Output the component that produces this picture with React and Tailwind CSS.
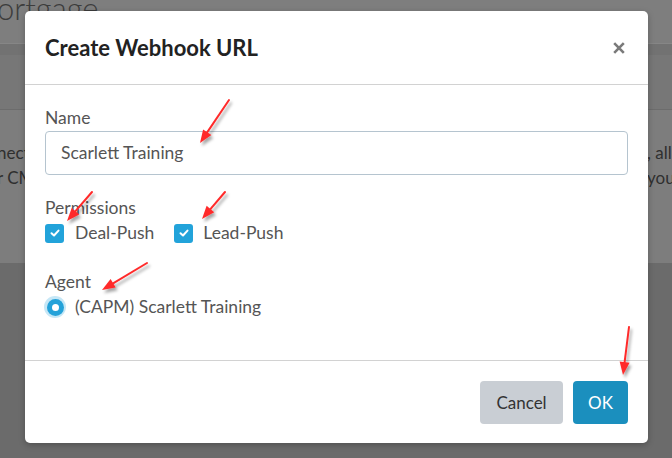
import React from "react";

function Arrow({ x1, y1, x2, y2 }) {
  const dx = x2 - x1;
  const dy = y2 - y1;
  const len = Math.sqrt(dx * dx + dy * dy);
  const ux = dx / len;
  const uy = dy / len;
  const hl = 13;
  const hw = 5;
  const bx = x2 - ux * hl;
  const by = y2 - uy * hl;
  const px = -uy;
  const py = ux;
  const pts = `${x2},${y2} ${bx + px * hw},${by + py * hw} ${bx - px * hw},${by - py * hw}`;
  return (
    <g filter="url(#ashadow)">
      <line x1={x1} y1={y1} x2={bx + ux * 2} y2={by + uy * 2} stroke="#ff2b2b" strokeWidth="2" strokeLinecap="round" />
      <polygon points={pts} fill="#ff2b2b" />
    </g>
  );
}

function Check() {
  return (
    <span className="flex h-[19px] w-[19px] items-center justify-center rounded-[3px] bg-[#22a3da]">
      <svg width="10" height="8" viewBox="0 0 10 8">
        <path d="M1.5 4.2 L4 6.5 L8.5 1.6" fill="none" stroke="#fff" strokeWidth="2" strokeLinecap="round" strokeLinejoin="round" />
      </svg>
    </span>
  );
}

export default function App() {
  return (
    <div className="relative h-[458px] w-[672px] overflow-hidden bg-[#6b6b6b] font-['Lato',sans-serif]">
      {/* background page (dimmed) */}
      <div className="flex h-full flex-col">
        <div className="h-[43px] overflow-hidden bg-[#7e7e7e]">
          <div className="-ml-[3px] -mt-[7px] text-[31px] font-light leading-none text-[#3c3c3c]">ortgage</div>
        </div>
        <div className="h-[12px] border-t border-[#868686] bg-[#727272]" />
        <div className="h-[55px] border-b border-[#6c6c6c] bg-[#777777]" />
        <div className="flex h-[153px] justify-between bg-[#7d7d7d] pt-[30px] text-[17px] leading-[25px] text-[#2f2f2f]">
          <div className="-ml-[3px]">
            <div>nect</div>
            <div>r CM</div>
          </div>
          <div className="w-[25px] whitespace-nowrap">
            <div>, all</div>
            <div>you</div>
          </div>
        </div>
        <div className="flex-1 bg-[#6b6b6b]" />
      </div>

      {/* modal */}
      <div className="absolute left-[25px] top-[11px] flex h-[432px] w-[623px] flex-col rounded-[5px] bg-white shadow-[0_2px_6px_rgba(0,0,0,0.25)]">
        <div className="flex h-[74px] items-center justify-between border-b border-[#d2d2d2] pl-[20px] pr-[23px]">
          <h2 className="text-[22px] font-bold text-[#222]">Create Webhook URL</h2>
          <svg width="12" height="12" viewBox="0 0 12 12">
            <path d="M1.2 1.2 L10.8 10.8 M10.8 1.2 L1.2 10.8" stroke="#7a7a7a" strokeWidth="2.6" strokeLinecap="butt" />
          </svg>
        </div>

        <div className="flex-1 px-[20px] pt-[21px] text-[17.5px] leading-[24px] text-[#555]">
          <div>Name</div>
          <div className="mt-[1px] flex h-[44px] items-center rounded-[4px] border border-[#b5c4cf] px-[15px] text-[#555]">
            Scarlett Training
          </div>

          <div className="mt-[21px]">Permissions</div>
          <div className="mt-[1px] flex h-[24px] items-center">
            <Check />
            <span className="ml-[11px]">Deal-Push</span>
            <span className="ml-[20px]">
              <Check />
            </span>
            <span className="ml-[10px]">Lead-Push</span>
          </div>

          <div className="mt-[25px]">Agent</div>
          <div className="mt-[1px] flex h-[24px] items-center">
            <span className="flex h-[22px] w-[22px] -ml-[1px] items-center justify-center rounded-full bg-[#c6e7f6]">
              <span className="flex h-[17px] w-[17px] items-center justify-center rounded-full bg-[#24a2d9]">
                <span className="h-[7px] w-[7px] rounded-full bg-white" />
              </span>
            </span>
            <span className="ml-[9px]">(CAPM) Scarlett Training</span>
          </div>
        </div>

        <div className="flex h-[83px] items-start justify-end gap-[10px] border-t border-[#d2d2d2] pr-[20px] pt-[20px] text-[17px]">
          <button className="h-[43px] w-[83px] rounded-[4px] bg-[#c9ced4] text-[#333]">Cancel</button>
          <button className="h-[43px] w-[55px] rounded-[4px] bg-[#1b8fbe] text-white">OK</button>
        </div>
      </div>

      {/* annotations */}
      <svg className="pointer-events-none absolute left-0 top-0" width="672" height="458">
        <defs>
          <filter id="ashadow" x="-50%" y="-50%" width="200%" height="200%">
            <feDropShadow dx="2" dy="3" stdDeviation="1.5" floodColor="#000" floodOpacity="0.35" />
          </filter>
        </defs>
        <Arrow x1={229} y1={100} x2={200} y2={143} />
        <Arrow x1={92} y1={192} x2={67} y2={221} />
        <Arrow x1={225} y1={192} x2={202} y2={219} />
        <Arrow x1={147} y1={263} x2={102} y2={290} />
        <Arrow x1={629} y1={327} x2={623} y2={375} />
      </svg>
    </div>
  );
}
